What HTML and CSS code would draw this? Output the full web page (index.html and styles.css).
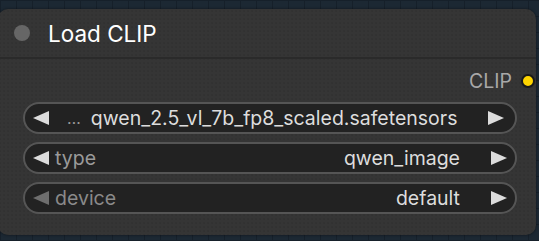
FILE: index.html
```html
<!DOCTYPE html>
<html>
<head>
<meta charset="utf-8">
<link rel="stylesheet" href="styles.css">
</head>
<body>
<div class="node">
  <div class="header">
    <span class="status-dot"></span>
    <span class="title">Load CLIP</span>
  </div>
  <div class="body">
    <div class="output-row">
      <span class="output-label">CLIP</span>
      <span class="output-dot"></span>
    </div>
    <div class="widgets">
      <div class="combo">
        <svg class="arrow" viewBox="0 0 16 14"><path d="M0 7L16 0V14Z"/></svg>
        <span class="ellipsis">…</span>
        <span class="value filename">qwen_2.5_vl_7b_fp8_scaled.safetensors</span>
        <svg class="arrow" viewBox="0 0 16 14"><path d="M16 7L0 0V14Z"/></svg>
      </div>
      <div class="combo">
        <svg class="arrow" viewBox="0 0 16 14"><path d="M0 7L16 0V14Z"/></svg>
        <span class="label">type</span>
        <span class="value">qwen_image</span>
        <svg class="arrow" viewBox="0 0 16 14"><path d="M16 7L0 0V14Z"/></svg>
      </div>
      <div class="combo">
        <svg class="arrow dim" viewBox="0 0 16 14"><path d="M0 7L16 0V14Z"/></svg>
        <span class="label">device</span>
        <span class="value">default</span>
        <svg class="arrow" viewBox="0 0 16 14"><path d="M16 7L0 0V14Z"/></svg>
      </div>
    </div>
  </div>
</div>
</body>
</html>
```

FILE: styles.css
```css
html, body {
  margin: 0;
  padding: 0;
}
body {
  width: 539px;
  height: 241px;
  overflow: hidden;
  background-color: #1c2833;
  background-image:
    linear-gradient(#16202a 1px, transparent 1px),
    linear-gradient(90deg, #16202a 1px, transparent 1px);
  background-size: 16px 16px;
  font-family: Inter, "Liberation Sans", sans-serif;
}
.node {
  margin: 9px 0 0 -2px;
  width: 538px;
  height: 226px;
  border-radius: 10px;
  background-color: #353535;
  background-image: radial-gradient(#2f2f2f 0.6px, transparent 0.8px);
  background-size: 4px 4px;
  box-shadow: 0 0 3px rgba(0,0,0,0.5);
  overflow: hidden;
  display: flex;
  flex-direction: column;
}
.header {
  height: 48px;
  display: flex;
  align-items: center;
  padding-left: 16px;
  border-bottom: 2px solid #2a2a2a;
  box-sizing: content-box;
}
.status-dot {
  width: 16px;
  height: 16px;
  border-radius: 50%;
  background: #666;
  margin-right: 18px;
}
.title {
  color: #ffffff;
  font-size: 22.5px;
  font-weight: 400;
}
.body {
  display: flex;
  flex-direction: column;
  padding: 11px 0 0 0;
}
.output-row {
  display: flex;
  justify-content: flex-end;
  align-items: center;
  height: 22px;
  padding-right: 1px;
}
.output-label {
  color: #a8a8a8;
  font-size: 19.5px;
  margin-right: 9px;
}
.output-dot {
  width: 10px;
  height: 10px;
  border-radius: 50%;
  background: #ffd500;
  border: 2px solid #1a1a1a;
}
.widgets {
  display: flex;
  flex-direction: column;
  gap: 8px;
  margin-top: 10px;
  padding-left: 25px;
  padding-right: 19px;
}
.combo {
  height: 32px;
  box-sizing: border-box;
  border: 2px solid #555555;
  border-radius: 16px;
  background: #222222;
  display: flex;
  align-items: center;
  padding: 0 8px 0 8px;
  font-size: 19.5px;
}
.arrow {
  width: 16px;
  height: 14px;
  fill: #dddddd;
  flex: none;
}
.arrow.dim {
  fill: #6e6e6e;
}
.ellipsis {
  color: #999;
  margin-left: 18px;
  font-size: 16px;
}
.label {
  color: #9a9a9a;
  margin-left: 6px;
}
.combo:last-child .label {
  color: #8a8a8a;
}
.value {
  color: #dddddd;
  margin-left: auto;
  margin-right: 31px;
}
.filename {
  margin-left: 10px;
}
```
